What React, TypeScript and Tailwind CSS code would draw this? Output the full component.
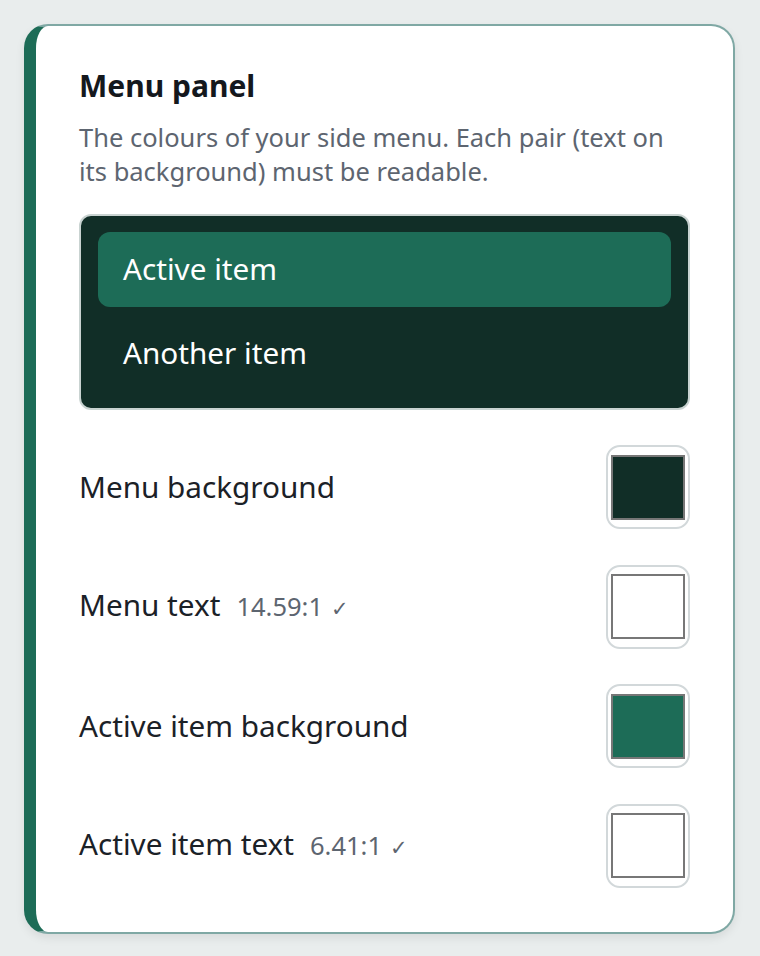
import { useState } from "react";

type Swatch = {
  label: string;
  color: string;
  ratio?: string;
};

const swatches: Swatch[] = [
  { label: "Menu background", color: "#112e27" },
  { label: "Menu text", color: "#ffffff", ratio: "14.59:1" },
  { label: "Active item background", color: "#1d6c57" },
  { label: "Active item text", color: "#ffffff", ratio: "6.41:1" },
];

const ColourRow = ({ item }: { item: Swatch }) => {
  return (
    <div className="flex items-center justify-between">
      <div className="flex items-baseline">
        <span className="text-[29.7px] leading-[36px] text-[#1b2127]">{item.label}</span>
        {item.ratio && (
          <span className="ml-4 text-[25.5px] text-[#5d6570]">
            {item.ratio}
            <span className="ml-2 text-[21px] text-[#5d6570]">✓</span>
          </span>
        )}
      </div>
      <div className="flex h-[84px] w-[84px] items-center justify-center rounded-[14px] border-2 border-[#d2d8da] bg-white">
        <div
          className="h-[65px] w-[74px] border-2 border-[#777777]"
          style={{ backgroundColor: item.color }}
        />
      </div>
    </div>
  );
};

export default function App() {
  const [active] = useState(0);

  return (
    <div
      className="min-h-screen bg-[#e9eded] px-6 pt-6"
      style={{ fontFamily: '"Noto Sans", "Open Sans", sans-serif' }}
    >
      <div className="w-[711px] rounded-[24px] border-2 border-l-[12px] border-[#7fa8a4] border-l-[#1d6c57] bg-white px-[43px] pb-[44px] pt-[42px] shadow-[0_4px_10px_rgba(0,0,0,0.08)]">
        <h2 className="text-[30px] font-bold leading-[36px] text-[#14181d]">Menu panel</h2>
        <p className="mt-4 text-[25.5px] leading-[34px] text-[#5d6570]">
          The colours of your side menu. Each pair (text on its background) must be readable.
        </p>

        {/* preview of the side menu */}
        <div className="mt-[26px] flex flex-col gap-[9px] rounded-[12px] border-2 border-[#c9d3d1] bg-[#112e27] px-[17px] pb-[17px] pt-[16px]">
          {["Active item", "Another item"].map((label, i) => (
            <div
              key={label}
              className={
                "flex h-[75px] items-center rounded-[12px] px-[25px] text-[29.7px] text-white " +
                (i === active ? "bg-[#1d6c57]" : "")
              }
            >
              {label}
            </div>
          ))}
        </div>

        <div className="mt-[35px] flex flex-col gap-[35.5px]">
          {swatches.map((s) => (
            <ColourRow key={s.label} item={s} />
          ))}
        </div>
      </div>
    </div>
  );
}
